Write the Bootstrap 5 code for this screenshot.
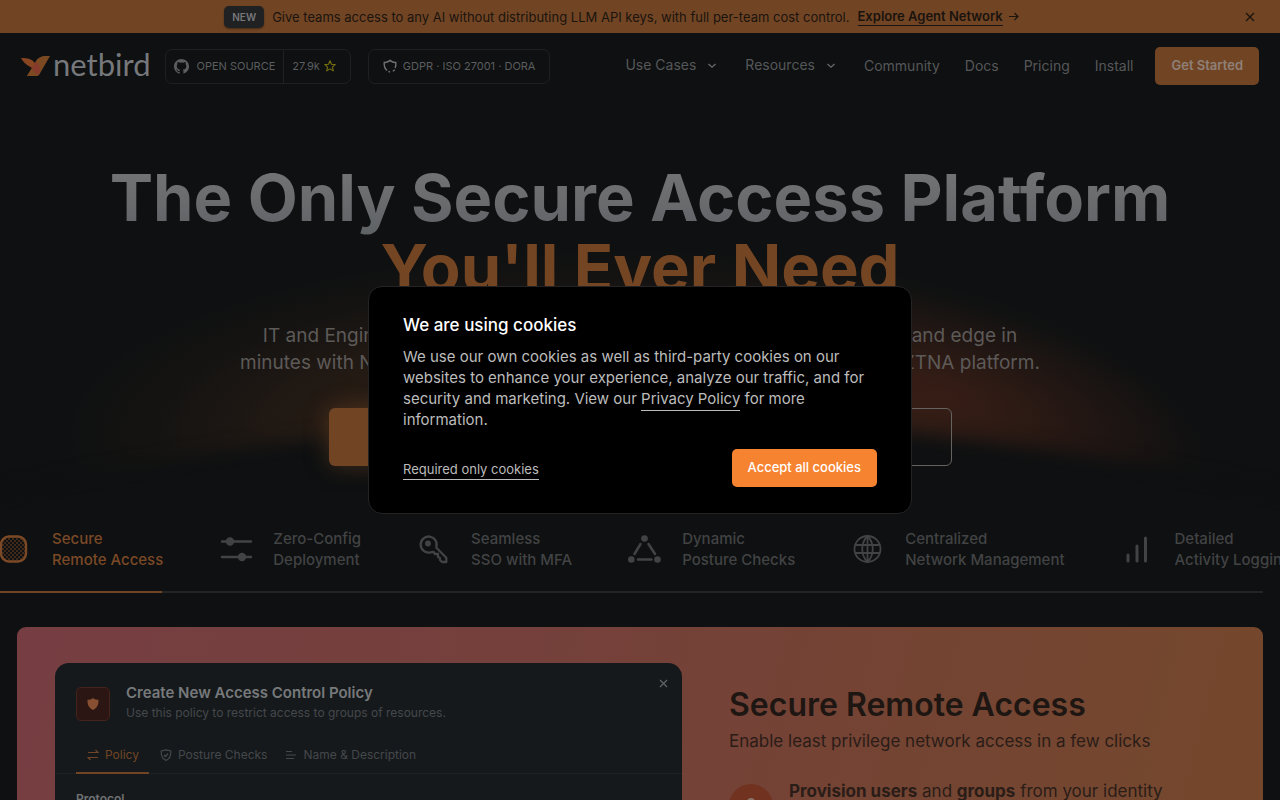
<!DOCTYPE html>
<html lang="en">
<head>
<meta charset="utf-8">
<meta name="viewport" content="width=device-width, initial-scale=1">
<title>NetBird</title>
<link href="https://cdn.jsdelivr.net/npm/bootstrap@5.3.0/dist/css/bootstrap.min.css" rel="stylesheet">
<style>
body{font-family:Inter,"Liberation Sans",sans-serif;background:#0e1011;color:#5c5c5d;height:100vh;overflow:hidden;font-size:14px;line-height:20px}
a{color:inherit;text-decoration:none}
svg{flex:none;display:block}
.promo{background:#714524;color:#1a130e;font-size:13px;height:33px;padding:0 24px}
.promo-tag{background:#1f2123;color:#77787a;font-size:10px;font-weight:600;line-height:22px;padding:0 8px;border-radius:5px;box-shadow:0 1px 2px #0006}
.promo a{font-weight:600;border-bottom:1px solid #1a130e;line-height:17px}
.plain{background:none;border:0;padding:0;color:inherit}
.topnav{padding:14px 21px 0}
.brand{font-family:Lato,"Liberation Sans",sans-serif;font-size:31px;line-height:30px;color:#77787b}
.brand span{margin:0 -2px 4px 2px}
.pill{border:1px solid #1e2022;border-radius:7px;height:35px;font-size:11px;color:#5c5d5f}
.pill .stars{padding-right:14px}
.pill .source{border-right:1px solid #1e2022}
.badges{padding:0 14px;gap:6px;margin-left:17px}
.links{gap:25px;color:#565759}
.links button{margin-bottom:3px}
.btn-brand{--bs-btn-color:#8f8078;--bs-btn-bg:#714524;--bs-btn-border-color:#714524;--bs-btn-hover-bg:#7d4c28;--bs-btn-hover-color:#a3948b;font-size:13px;font-weight:600;height:38px;padding:0 16px;border-radius:5px;border:0}
.links + .btn{margin-left:22px}
.hero{padding-top:78px;position:relative}
.glow{position:absolute;left:0;top:80px;width:100%;height:400px;z-index:-1}
.hero h1{font-size:65px;line-height:70px;font-weight:700;margin:0;color:#734523}
.hero h1 span{display:inline-block;padding-bottom:12px;margin-bottom:-12px;background:linear-gradient(#757577,#5c6063);-webkit-background-clip:text;background-clip:text;color:transparent}
.lede{font-size:19px;line-height:27px;margin-top:19px;color:#5d5a58}
.cta{margin-top:32px;gap:17px}
.cta .btn{height:58px;width:303px;font-size:17px;border-radius:6px}
.cta .btn-brand{box-shadow:0 0 22px #7145248c}
.cta .btn-line{border:1px solid #66625f;color:#77787a}
.strip{margin:62px 0 0 -2px;gap:56px;font-size:15px;line-height:21px;font-weight:500;color:#424344;white-space:nowrap;overflow:hidden}
.strip button{gap:20px;text-align:left;flex:none;font-weight:500}
.strip .on{color:#7b4926}
.track{height:2px;margin:21px 17px 34px 0;background:#232426}
.track div{height:2px;width:162px;background:#714524}
.feature{margin:0 17px;border-radius:9px;background:linear-gradient(105deg,#763e42 0,#75403c 35%,#744334 60%,#744630 78%,#744829 100%);padding:36px 38px;height:600px}
.policy{width:627px;flex:none;height:560px;border-radius:14px;background:#15191c;font-size:12px;color:#45484b}
.policy-head{padding:16px 14px 0 21px}
.policy h3{font-size:15px;line-height:20px;font-weight:600;margin:0;color:#77797b}
.shield{width:34px;height:34px;border-radius:5px;background:#2b1613;border:1px solid #44231b}
.ptabs{border-bottom:1px solid #1c2124;padding:0 21px;margin-top:15px}
.ptabs button{gap:6px;height:36px;padding:0 7px 0 11px;border-bottom:2px solid transparent;margin-bottom:-1px}
.ptabs .on{color:#714524;border-color:#714524;padding-right:10px}
.proto{padding:15px 21px;color:#707274;font-weight:600}
.copy{padding:23px 0 0 47px;color:#2a1c17;font-size:17px;line-height:26px}
.copy h2{font-size:32px;line-height:38px;font-weight:600;color:#1e1612;margin:0 0 4px}
.disc{width:44px;height:44px;border-radius:50%;background:#71321f;flex:none;margin-top:6px}
.veil{position:fixed;inset:0;z-index:10}
.cookie{width:544px;background:#000;border:1px solid #242424;border-radius:14px;padding:26px 34px;color:#bcbcbc;font-size:15px;line-height:21px}
.cookie h2{font-size:17px;line-height:24px;font-weight:500;color:#fff;margin:0 0 9px}
.cookie p{margin-bottom:19px}
.cookie a{border-bottom:1px solid #bcbcbc;padding-bottom:2px}
.cookie .req{font-size:13px;border-bottom:1px solid #bcbcbc;line-height:20px;margin-top:2px}
.cookie .btn-brand{--bs-btn-bg:#f68330;--bs-btn-color:#fff;font-weight:500}
</style>
</head>
<body class="d-flex flex-column">
<div class="promo d-flex align-items-center flex-shrink-0">
  <div class="flex-grow-1 d-flex align-items-center justify-content-center me-4">
    <span class="promo-tag me-2">NEW</span>
    <span>Give teams access to any AI without distributing LLM API keys, with full per-team cost control.</span>
    <a href="#" class="ms-2">Explore Agent Network</a>
    <svg class="ms-1" width="13" height="13" viewBox="0 0 13 13" fill="none" stroke="#1a130e" stroke-width="1.2"><path d="M2 6.5h9M7.5 3 11 6.500 7.500 10"/></svg>
  </div>
  <button class="plain" aria-label="Dismiss"><svg width="12" height="12" viewBox="0 0 12 12" stroke="#1a130e" stroke-width="1.3"><path d="M2 2l8 8M10 2l-8 8"/></svg></button>
</div>
<nav class="topnav d-flex align-items-center flex-shrink-0">
  <a href="#" class="brand d-flex align-items-center">
    <svg width="30" height="22" viewBox="0 0 30 22"><path d="M0 3c7 0 11 1 14 5l3 12-4 1H6l5-8C8 11 3 9 0 3z" fill="#884522"/><path d="M14 8c2-5 6-7 10-7h5L18 20c-1 1-2 1-3 1H6z" fill="#7b4a22"/><path d="M11 13l4-6c4 2 5 7 3 12l-1 1c-3-2-5-4-6-7z" fill="#873b2d"/></svg>
    <span>netbird</span>
  </a>
  <div class="pill d-flex align-items-stretch ms-3">
    <a href="#" class="source d-flex align-items-center gap-2 px-2"><svg width="15" height="15" viewBox="0 0 16 16" fill="#5c5d5f"><path d="M8 0C3.580 0 0 3.580 0 8c0 3.540 2.290 6.530 5.470 7.590.4.070.55-.17.55-.38v-1.490c-2.010.370-2.530-.490-2.690-.940-.090-.230-.480-.940-.820-1.130-.280-.150-.680-.520-.010-.530.630-.010 1.080.580 1.230.820.720 1.210 1.870.870 2.330.660.070-.520.280-.870.510-1.070-1.780-.200-3.640-.890-3.640-3.950 0-.870.310-1.590.820-2.150-.080-.200-.360-1.020.080-2.120 0 0 .670-.210 2.200.820a7.600 7.600 0 0 1 4 0c1.530-1.040 2.200-.820 2.200-.820.440 1.100.160 1.920.080 2.120.510.560.820 1.270.820 2.150 0 3.070-1.870 3.750-3.650 3.950.290.250.540.730.540 1.480v2.190c0 .210.150.460.550.380A8 8 0 0 0 8 0z"/></svg>OPEN SOURCE</a>
    <a href="#" class="stars d-flex align-items-center gap-1 ps-2">27.9k <svg width="12" height="12" viewBox="0 0 12 12" fill="none" stroke="#78700f" stroke-width="1.1" stroke-linejoin="round"><path d="M6 .8l1.500 3.500 3.700.3-2.800 2.500.9 3.800L6 8.900l-3.300 2 .9-3.800L.8 4.600l3.700-.3z"/></svg></a>
  </div>
  <a href="#" class="pill badges d-flex align-items-center"><svg width="14" height="14" viewBox="0 0 14 14" fill="none" stroke="#707173" stroke-width="1.400"><path d="M4 11.500C1.500 9.500 1 7 1.200 3.500 3.500 3.800 5 3 7 1.400 9 3 10.500 3.800 12.800 3.500c.2 2 0 4-.7 5.500M5.500 12.300 7 13.200M9.800 12.300l2-1.600"/></svg>GDPR · ISO 27001 · DORA</a>
  <div class="links d-flex align-items-center ms-auto">
    <button class="plain d-flex align-items-center">Use Cases<svg class="ms-2" width="16" height="16" viewBox="0 0 16 16" fill="none" stroke="#68696b" stroke-width="1.300"><path d="M4.500 7 8 10.200 11.500 7"/></svg></button>
    <button class="plain d-flex align-items-center">Resources<svg class="ms-2" width="16" height="16" viewBox="0 0 16 16" fill="none" stroke="#68696b" stroke-width="1.300"><path d="M4.500 7 8 10.200 11.500 7"/></svg></button>
    <a href="#">Community</a><a href="#">Docs</a><a href="#">Pricing</a><a href="#">Install</a>
  </div>
  <button class="btn btn-brand">Get Started</button>
</nav>
<main class="flex-shrink-0">
<section class="hero text-center">
  <svg class="glow" viewBox="0 165 1280 400" preserveAspectRatio="none">
    <defs>
      <radialGradient id="g" cx=".5" cy=".5" r=".5"><stop offset="0" stop-color="#8a4a22" stop-opacity=".7"/><stop offset=".5" stop-color="#8a4a22" stop-opacity=".2"/><stop offset=".78" stop-color="#8a4a22" stop-opacity=".07"/><stop offset="1" stop-color="#8a4a22" stop-opacity="0"/></radialGradient>
      <radialGradient id="r" cx=".5" cy=".5" r=".5"><stop offset="0" stop-color="#5a2418" stop-opacity=".38"/><stop offset="1" stop-color="#5a2418" stop-opacity="0"/></radialGradient>
      <filter id="b" x="-10%" y="-30%" width="120%" height="160%" color-interpolation-filters="sRGB"><feGaussianBlur stdDeviation="9"/></filter>
    </defs>
    <ellipse cx="620" cy="435" rx="570" ry="190" fill="url(#g)"/>
    <ellipse cx="950" cy="395" rx="280" ry="95" fill="url(#r)" transform="rotate(16 950 395)"/>
    <path d="M-60 510Q640 330 1340 510V640H-60z" fill="#0e1011" filter="url(#b)"/>
  </svg>
  <h1><span>The Only Secure Access Platform</span><br>You'll Ever Need</h1>
  <p class="lede mb-0">IT and Engineering teams securely connect all users, cloud, on-premise and edge in<br>minutes with NetBird's open source, WireGuard®-based overlay VPN and ZTNA platform.</p>
  <div class="cta d-flex justify-content-center">
    <button class="btn btn-brand">Get Started</button>
    <button class="btn btn-line">Book a Demo</button>
  </div>
</section>
<div class="strip d-flex align-items-center">
  <button class="plain d-flex align-items-center on"><svg width="34" height="34" viewBox="0 0 34 34"><defs><pattern id="dots" width="4" height="4" patternUnits="userSpaceOnUse"><circle cx="1" cy="1" r=".8" fill="#7b4926"/><circle cx="3" cy="3" r=".8" fill="#7b4926"/></pattern></defs><rect x="3" y="4.500" width="25" height="25" rx="8" fill="url(#dots)" stroke="#7b4926" stroke-width="2.400"/></svg><span>Secure<br>Remote Access</span></button>
  <button class="plain d-flex align-items-center"><svg width="34" height="34" viewBox="0 0 34 34" stroke="#424344" stroke-width="2.400" stroke-linecap="round"><path d="M3 9.500h29M3 25h29"/><circle cx="11" cy="9.500" r="3" fill="#424344"/><circle cx="23" cy="25" r="3" fill="#424344"/></svg><span>Zero-Config<br>Deployment</span></button>
  <button class="plain d-flex align-items-center"><svg width="34" height="34" viewBox="0 0 34 34" fill="none" stroke="#424344" stroke-width="2.300" stroke-linejoin="round"><path d="M19.400 14.500A8 8 0 1 0 13.500 20.300L16.500 19.800 18 22h3v3l2 1v2l2 2h4.300v-4.300l-9.900-9.900z"/><circle cx="11" cy="11.500" r="1.800" fill="#424344"/></svg><span>Seamless<br>SSO with MFA</span></button>
  <button class="plain d-flex align-items-center"><svg width="34" height="34" viewBox="0 0 34 34" fill="#424344" stroke="#424344" stroke-width="2.500" stroke-linecap="round"><g stroke="none"><circle cx="16.500" cy="6.500" r="3.300"/><circle cx="3.300" cy="27.500" r="3.300"/><circle cx="29.500" cy="27.500" r="3.300"/></g><path d="M12.500 12 6.500 22M20.500 12l6.500 10M10 27.500h13.500"/></svg><span>Dynamic<br>Posture Checks</span></button>
  <button class="plain d-flex align-items-center"><svg width="34" height="34" viewBox="0 0 34 34" fill="none" stroke="#424344" stroke-width="1.800"><circle cx="16.500" cy="17" r="13"/><path d="M16.500 4v26M4.500 13h24M4.500 21h24M16.500 4c-7 7-7 19 0 26M16.500 4c7 7 7 19 0 26"/></svg><span>Centralized<br>Network Management</span></button>
  <button class="plain d-flex align-items-center"><svg width="34" height="34" viewBox="0 0 34 34" stroke="#424344" stroke-width="3" stroke-linecap="round"><path d="M7 23v6M16 14v15M24.500 6v23"/></svg><span>Detailed<br>Activity Logging</span></button>
</div>
<div class="track"><div></div></div>
<section class="feature d-flex">
  <div class="policy">
    <div class="policy-head d-flex align-items-start">
      <div class="shield d-flex align-items-center justify-content-center mt-2"><svg width="12" height="12" viewBox="0 0 12 12" fill="#875032"><path d="M6 0c2 1.500 3.500 1.600 5.500 1.800C11.700 7 10 10 6 12 2 10 .3 7 .5 1.800 2.500 1.600 4 1.500 6 0z"/></svg></div>
      <div class="ms-3 mt-1"><h3>Create New Access Control Policy</h3><div>Use this policy to restrict access to groups of resources.</div></div>
      <button class="plain ms-auto" aria-label="Close"><svg width="9" height="9" viewBox="0 0 9 9" stroke="#606366" stroke-width="1.300"><path d="M1 1l7 7M8 1l-7 7"/></svg></button>
    </div>
    <div class="ptabs d-flex">
      <button class="plain d-flex align-items-center on"><svg width="12" height="12" viewBox="0 0 12 12" fill="none" stroke="#714524" stroke-width="1.200"><path d="M1 3.500h10L8.500 1M11 8.500H1L3.500 11"/></svg>Policy</button>
      <button class="plain d-flex align-items-center"><svg width="12" height="12" viewBox="0 0 12 12" fill="none" stroke="#45484b" stroke-width="1.200"><path d="M6 .8 10.800 2C11 7 9.500 10 6 11.400 2.500 10 1 7 1.200 2zM4 6l1.500 1.500L8 4.500"/></svg>Posture Checks</button>
      <button class="plain d-flex align-items-center"><svg width="12" height="12" viewBox="0 0 12 12" stroke="#45484b" stroke-width="1.200"><path d="M1 2.500h6M1 6h10M1 9.500h8"/></svg>Name &amp; Description</button>
    </div>
    <div class="proto">Protocol</div>
  </div>
  <div class="copy flex-grow-1">
    <h2>Secure Remote Access</h2>
    <div>Enable least privilege network access in a few clicks</div>
    <div class="d-flex mt-4"><div class="disc d-flex align-items-center justify-content-center"><svg width="18" height="18" viewBox="0 0 18 18" fill="none" stroke="#8a7568" stroke-width="2"><circle cx="9" cy="5" r="3"/><path d="M3 16c0-7 12-7 12 0"/></svg></div>
    <div class="ms-3"><b>Provision users</b> and <b>groups</b> from your identity<br>provider</div></div>
  </div>
</section>
</main>
<div class="veil d-flex align-items-center justify-content-center">
  <div class="cookie" role="dialog" aria-labelledby="ck">
    <h2 id="ck">We are using cookies</h2>
    <p>We use our own cookies as well as third-party cookies on our websites to enhance your experience, analyze our traffic, and for security and marketing. View our <a href="#">Privacy Policy</a> for more information.</p>
    <div class="d-flex justify-content-between align-items-center"><button class="plain req">Required only cookies</button><button class="btn btn-brand">Accept all cookies</button></div>
  </div>
</div>
<script src="https://cdn.jsdelivr.net/npm/bootstrap@5.3.0/dist/js/bootstrap.bundle.min.js"></script>
</body>
</html>
